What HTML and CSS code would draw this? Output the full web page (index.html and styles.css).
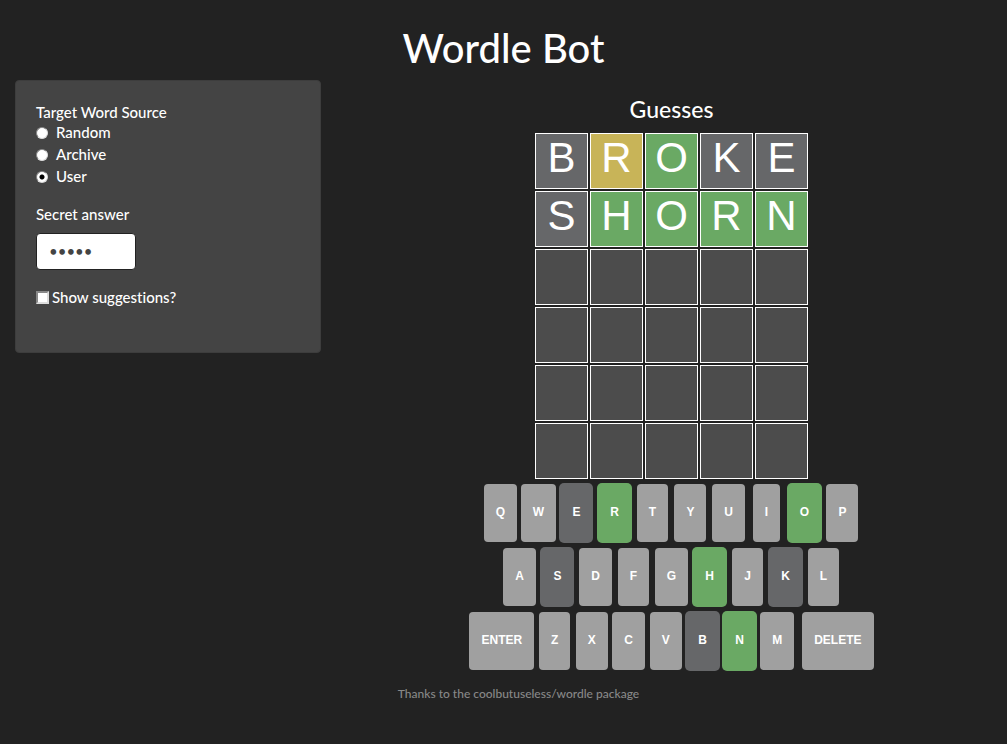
FILE: index.html
```html
<!DOCTYPE html>
<html lang="en">
<head>
<meta charset="utf-8">
<meta name="viewport" content="width=device-width, initial-scale=1">
<title>Wordle Bot</title>
<link rel="stylesheet" href="styles.css">
</head>
<body>
<h1 class="title">Wordle Bot</h1>
<div class="layout">
  <form class="sidebar">
    <fieldset class="source">
      <legend>Target Word Source</legend>
      <label class="option"><input type="radio" name="source"><span>Random</span></label>
      <label class="option"><input type="radio" name="source"><span>Archive</span></label>
      <label class="option"><input type="radio" name="source" checked><span>User</span></label>
    </fieldset>
    <div class="answer">
      <label for="answer">Secret answer</label>
      <input type="password" id="answer" value="storm" autocomplete="off">
    </div>
    <label class="suggest"><input type="checkbox"><span>Show suggestions?</span></label>
  </form>
  <main class="main">
    <h3 class="heading">Guesses</h3>
    <div class="board">
      <div class="cell absent">B</div><div class="cell present">R</div><div class="cell correct">O</div><div class="cell absent">K</div><div class="cell absent">E</div>
      <div class="cell absent">S</div><div class="cell correct">H</div><div class="cell correct">O</div><div class="cell correct">R</div><div class="cell correct">N</div>
      <div class="cell"></div><div class="cell"></div><div class="cell"></div><div class="cell"></div><div class="cell"></div>
      <div class="cell"></div><div class="cell"></div><div class="cell"></div><div class="cell"></div><div class="cell"></div>
      <div class="cell"></div><div class="cell"></div><div class="cell"></div><div class="cell"></div><div class="cell"></div>
      <div class="cell"></div><div class="cell"></div><div class="cell"></div><div class="cell"></div><div class="cell"></div>
    </div>
    <div class="keyboard">
      <div class="keys">
        <div class="slot"><button class="key">Q</button></div>
        <div class="slot"><button class="key">W</button></div>
        <div class="slot"><button class="key absent">E</button></div>
        <div class="slot"><button class="key correct">R</button></div>
        <div class="slot"><button class="key">T</button></div>
        <div class="slot"><button class="key">Y</button></div>
        <div class="slot"><button class="key">U</button></div>
        <div class="slot"><button class="key">I</button></div>
        <div class="slot"><button class="key correct">O</button></div>
        <div class="slot"><button class="key">P</button></div>
      </div>
      <div class="keys">
        <div class="slot"><button class="key">A</button></div>
        <div class="slot"><button class="key absent">S</button></div>
        <div class="slot"><button class="key">D</button></div>
        <div class="slot"><button class="key">F</button></div>
        <div class="slot"><button class="key">G</button></div>
        <div class="slot"><button class="key correct">H</button></div>
        <div class="slot"><button class="key">J</button></div>
        <div class="slot"><button class="key absent">K</button></div>
        <div class="slot"><button class="key">L</button></div>
      </div>
      <div class="keys compact">
        <div class="slot"><button class="key">ENTER</button></div>
        <div class="slot"><button class="key">Z</button></div>
        <div class="slot"><button class="key">X</button></div>
        <div class="slot"><button class="key">C</button></div>
        <div class="slot"><button class="key">V</button></div>
        <div class="slot"><button class="key absent">B</button></div>
        <div class="slot"><button class="key correct">N</button></div>
        <div class="slot"><button class="key">M</button></div>
        <div class="slot delete"><button class="key">DELETE</button></div>
      </div>
    </div>
  </main>
</div>
<footer class="footer">Thanks to the coolbutuseless/wordle package</footer>
</body>
</html>
```
FILE: styles.css
```css
* { box-sizing: border-box; }

body {
  margin: 0;
  padding: 24px 15px;
  background: #222;
  color: #fff;
  font: 500 15px/21px Lato, sans-serif;
  font-variant-ligatures: none;
}

.title {
  margin: 0 0 8px;
  font-size: 40px;
  font-weight: 500;
  line-height: 48px;
  text-align: center;
}

.layout {
  display: grid;
  grid-template-columns: minmax(0, 306fr) minmax(0, 641fr);
  gap: 30px;
  align-items: start;
}

.sidebar {
  padding: 21px 20px 44px;
  border: 1px solid #3d3d3d;
  border-radius: 4px;
  background: #444;
}

.source {
  margin: 0 0 16px;
  padding: 0;
  border: 0;
}

.source legend {
  padding: 0;
  line-height: 20px;
}

.option {
  display: flex;
  align-items: center;
  gap: 8px;
  margin-bottom: 1px;
}

.option input {
  appearance: none;
  width: 12px;
  height: 12px;
  margin: 0;
  border: 1px solid;
  border-color: #888 #ddd #ddd #888;
  border-radius: 50%;
  background: #fff;
}

.option input:checked {
  background: radial-gradient(circle, #000 2px, #fff 3px);
}

.answer {
  display: flex;
  flex-direction: column;
  align-items: flex-start;
  gap: 8px;
  margin-bottom: 17px;
}

.answer input {
  width: 100px;
  height: 37px;
  padding: 0 12px 1px;
  border: 1px solid #222;
  border-radius: 4px;
  background: #fff;
  color: #444;
  font: 15px Lato, sans-serif;
}

.suggest {
  display: flex;
  align-items: center;
  gap: 3px;
}

.suggest input {
  appearance: none;
  width: 13px;
  height: 13px;
  margin: 0;
  border: 2px solid;
  border-color: #888 #ddd #ddd #888;
  background: #fff;
}

.main {
  display: flex;
  flex-direction: column;
  align-items: center;
  padding-top: 16px;
}

.heading {
  margin: 0 0 10px;
  font-size: 23px;
  font-weight: 500;
  line-height: 27px;
}

.board {
  display: grid;
  grid-template-columns: repeat(5, 53px);
  grid-auto-rows: 56px;
  gap: 2px;
  margin-bottom: 4px;
}

.cell {
  border: 1px solid #fff;
  background: #4c4c4c;
  font: 42px/48px "Liberation Sans", Arial, sans-serif;
  text-align: center;
}

.keyboard {
  display: flex;
  flex-direction: column;
  gap: 4px;
}

.keys {
  display: flex;
  justify-content: center;
}

.slot {
  display: flex;
  justify-content: center;
  min-width: 38px;
}

.compact .slot {
  min-width: 37px;
  padding: 0 1px;
}

.compact .delete { margin-left: 4px; }

.key {
  height: 60px;
  padding: 0 12px 2px;
  border: 1px solid transparent;
  border-radius: 5px;
  background: #a0a0a0 padding-box;
  color: #fff;
  font: bold 12px/16px "Liberation Sans", Arial, sans-serif;
}

.absent {
  background: #666769 border-box;
}

.present {
  background: #c8b458 border-box;
}

.correct {
  background: #6aa964 border-box;
}

.footer {
  margin-top: 14px;
  padding-left: 30px;
  color: #888;
  font-size: 12px;
  line-height: 18px;
  text-align: center;
}
```
